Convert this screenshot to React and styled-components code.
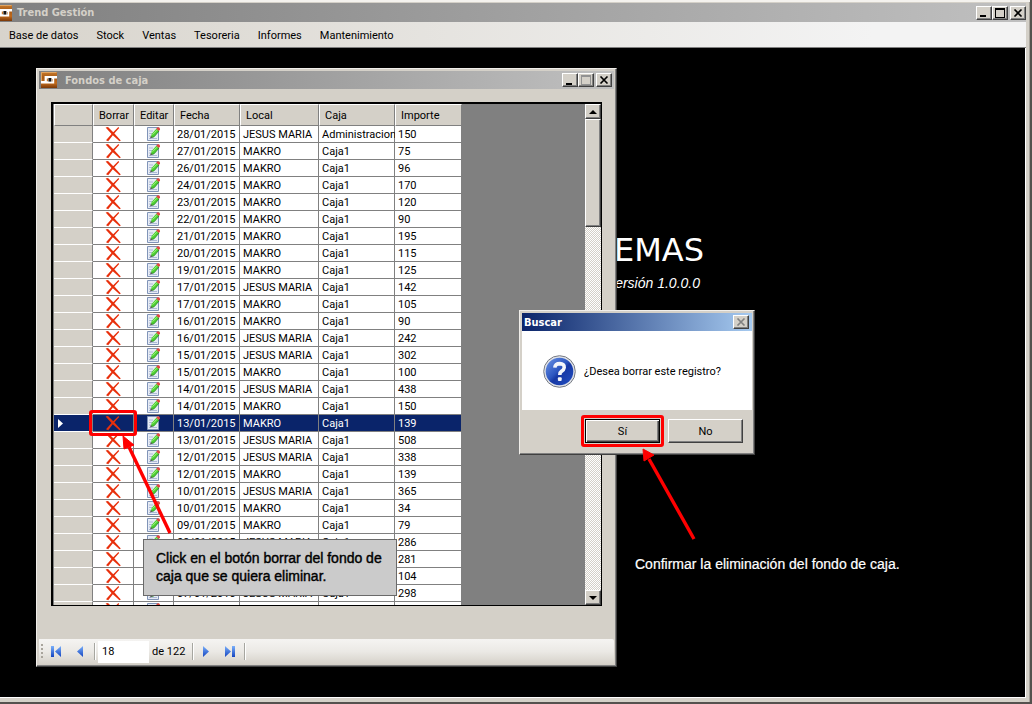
import React from "react";
import styled, { createGlobalStyle, css } from "styled-components";

const face = "#d4d0c8";
const uiFont = `Roboto, "Liberation Sans", sans-serif`;
const noteFont = `"Liberation Sans", Arial, sans-serif`;
const titleFont = `"DejaVu Sans Condensed", "DejaVu Sans", sans-serif`;

const GlobalStyle = createGlobalStyle`
  *, *::before, *::after { box-sizing: border-box; }
  body { margin: 0; background: #000; font: 11px/14px ${uiFont}; color: #000; }
  button, input { font: inherit; color: inherit; margin: 0; }
  button { cursor: default; }
`;

const raised = css`
  border: 1px solid;
  border-color: #fff #404040 #404040 #fff;
  box-shadow: inset -1px -1px 0 #808080;
  background: ${face};
`;

const MainWindow = styled.div`
  display: flex;
  flex-direction: column;
  min-height: 100vh;
  overflow: hidden;
  background: ${face};
  padding: 3px 4px 4px 0;
  border-right: 2px solid #55514e;
  border-bottom: 2px solid #55514e;
  box-shadow: inset 0 2px 0 #f4f2ee, inset -1px 0 0 #a8a49c;
`;

const TitleBar = styled.header`
  display: flex;
  align-items: center;
  flex: none;
  height: ${(p) => p.$height || 18}px;
  padding: ${(p) => p.$pad || "0 3px"};
  color: ${(p) => (p.$active ? "#fff" : face)};
  background: linear-gradient(90deg, ${(p) => (p.$active ? "#0a246a, #a6caf0" : "#808080, #c0c0c0")});
`;

const TitleText = styled.h1`
  flex: 1;
  margin: 0 0 0 ${(p) => p.$gap || 0}px;
  padding-top: 1px;
  font: bold 11px/16px ${titleFont};
`;

const TitleLogo = styled.svg`
  flex: none;
`;

const Caption = styled.button`
  ${raised}
  display: flex;
  align-items: center;
  justify-content: center;
  width: 16px;
  height: 14px;
  padding: 0;
  margin-left: ${(p) => (p.$apart ? 2 : 0)}px;
`;

const MenuBar = styled.nav`
  display: flex;
  align-items: center;
  flex: none;
  height: 26px;
  padding-top: 1px;
  background: linear-gradient(90deg, #d8d4cc, #f3f3f3 85%);
  border-bottom: 1px solid #808080;
`;

const MenuItem = styled.button`
  border: 0;
  padding: 5px 9px 4px;
  background: none;
`;

const Desktop = styled.main`
  position: relative;
  flex: 1;
  background: #000;
  border-right: 1px solid #fff;
  border-bottom: 1px solid #fff;
`;

const Brand = styled.div`
  position: absolute;
  left: 597px;
  top: 184px;
  width: 107px;
  color: #fff;
  text-align: right;
`;

const BrandName = styled.div`
  font: 32px/36px "DejaVu Sans", sans-serif;
`;

const BrandVersion = styled.div`
  padding: 6px 4px 0 0;
  font: italic 14px/18px ${noteFont};
`;

const Frame = styled.section`
  position: absolute;
  left: ${(p) => p.$x}px;
  top: ${(p) => p.$y}px;
  width: ${(p) => p.$w}px;
  padding: 2px;
  background: ${face};
  border: 1px solid;
  border-color: #f0eeea #404040 #404040 #f0eeea;
  box-shadow: inset -1px -1px 0 #808080;
`;

const GridBox = styled.div`
  display: flex;
  justify-content: space-between;
  height: 504px;
  margin: 13px 12px 33px 12px;
  padding-left: 1px;
  border: solid #000;
  border-width: 2px 1px 1px 2px;
  background: #808080;
  overflow: hidden;
`;

const Table = styled.table`
  align-self: flex-start;
  width: 408px;
  table-layout: fixed;
  border-collapse: separate;
  border-spacing: 0;
`;

const HeadCell = styled.th`
  height: 22px;
  padding: 2px 0 0 5px;
  text-align: left;
  font-weight: normal;
  white-space: nowrap;
  background: ${face};
  border: 1px solid;
  border-color: #fff #808080 #808080 #fff;
`;

const RowHead = styled.th`
  height: 17px;
  padding: 0 0 0 4px;
  line-height: 0;
  background: ${(p) => (p.$selected ? "#0a246a" : face)};
  border-bottom: 1px solid #fff;
  border-right: 1px solid #808080;
  text-align: left;
`;

const Cell = styled.td`
  position: relative;
  height: 17px;
  padding: ${(p) => (p.$icon ? "0" : "2px 0 0 3px")};
  line-height: ${(p) => (p.$icon ? "0" : "14px")};
  text-align: ${(p) => (p.$icon ? "center" : "left")};
  white-space: nowrap;
  color: ${(p) => (p.$selected ? "#fff" : "#000")};
  background: ${(p) => (p.$selected ? "#0a246a" : "#fff")};
  border-bottom: 1px solid #808080;
  border-right: 1px solid #808080;
`;

const CellButton = styled.button`
  display: block;
  width: 16px;
  height: 16px;
  margin: 0 auto;
  padding: 0;
  border: 0;
  background: none;
`;

const CellMark = styled.span`
  position: absolute;
  z-index: 1;
  inset: -5px -4px;
  border: 3px solid #f00;
  border-radius: 3px;
  pointer-events: none;
`;

const ScrollBar = styled.div`
  display: flex;
  flex-direction: column;
  width: 16px;
  background: repeating-conic-gradient(#fff 0 25%, ${face} 0 50%) 0 0 / 2px 2px;
`;

const ScrollButton = styled.button`
  ${raised}
  display: flex;
  align-items: center;
  justify-content: center;
  height: 15px;
  padding: 0;
`;

const ScrollThumb = styled.div`
  ${raised}
  height: 108px;
  margin-bottom: auto;
`;

const Navigator = styled.footer`
  display: flex;
  align-items: center;
  height: 25px;
  padding-left: 2px;
  border-radius: 0 2px 2px 0;
  background: linear-gradient(#f5f4f2, #ebe9e5 50%, #d6d2ca);
`;

const Grip = styled.span`
  width: 2px;
  height: 15px;
  margin-right: 1px;
  background: repeating-linear-gradient(#a8a49c 0 2px, transparent 2px 4px);
`;

const NavButton = styled.button`
  display: flex;
  align-items: center;
  justify-content: center;
  width: 24px;
  height: 22px;
  padding: 0;
  border: 0;
  background: none;
`;

const NavRule = styled.span`
  width: 2px;
  height: 17px;
  margin: 0 ${(p) => p.$gap || 0}px;
  background: #a6a6a0;
  border-right: 1px solid #fff;
`;

const Position = styled.input`
  width: 51px;
  height: 22px;
  padding: 0 4px;
  border: 0;
  background: #fff;
`;

const Total = styled.span`
  padding: 0 7px 0 3px;
`;

const Message = styled.div`
  display: flex;
  align-items: center;
  gap: 8px;
  height: 79px;
  padding: 1px 0 0 21px;
  background: #fff;
`;

const MessageText = styled.p`
  margin: 0;
  padding-top: 2px;
`;

const Actions = styled.div`
  display: flex;
  justify-content: flex-end;
  gap: 8px;
  padding: 9px 9px;
`;

const PushSlot = styled.div`
  position: relative;
`;

const Push = styled.button`
  ${raised}
  display: block;
  width: 75px;
  height: 24px;
  padding: 2px 0 0;
  ${(p) => p.$default && "border-color: #000; box-shadow: inset 1px 1px 0 #fff, inset -1px -1px 0 #404040, inset -2px -2px 0 #808080;"}
`;

const PushMark = styled.span`
  position: absolute;
  inset: -4px;
  border: 3px solid #f00;
  border-radius: 3px;
  pointer-events: none;
`;

const Note = styled.p`
  position: absolute;
  left: 143px;
  top: 491px;
  width: 254px;
  margin: 0;
  padding: 9px 0 10px 12px;
  font: 14px/18px ${noteFont};
  -webkit-text-stroke: 0.4px currentColor;
  background: #cbcbcb;
  border: 1px solid #6a6a6a;
`;

const Remark = styled.p`
  position: absolute;
  left: 635px;
  top: 507px;
  margin: 0;
  color: #fff;
  font: 14px/18px ${noteFont};
  -webkit-text-stroke: 0.2px currentColor;
  white-space: nowrap;
`;

const Arrow = styled.svg`
  position: absolute;
  left: ${(p) => p.$x}px;
  top: ${(p) => p.$y}px;
  pointer-events: none;
`;

const Logo = ({ cropped }) => (
  <TitleLogo width={cropped ? 12 : 16} height="16" viewBox={cropped ? "4 0 12 16" : "0 0 16 16"} aria-hidden="true">
    <defs>
      <linearGradient id="copper" x1="0" y1="0" x2="0" y2="1">
        <stop offset="0" stopColor="#c87a2c" />
        <stop offset=".35" stopColor="#a85a14" />
        <stop offset=".7" stopColor="#c06a1c" />
        <stop offset="1" stopColor="#7a3808" />
      </linearGradient>
    </defs>
    <rect width="16" height="16" fill="url(#copper)" />
    <path d="M0 .5H15.5M.5 0V9" stroke="#e0a460" fill="none" />
    <path d="M4 4H16V6.4H13.2V11.6H0V9H3.6V4Z" fill="#fff" />
    <path d="M5.8 6.4H7V9.2H5.8Z" fill="#c87a2c" />
    <path d="M7.4 6H10.4V9.6H7.4Z" fill="#181410" />
    <path d="M11 7H12V9.6H11Z" fill="#d8b08c" />
  </TitleLogo>
);

const Minimize = () => (
  <svg width="10" height="9" aria-hidden="true"><path d="M1 7H7V9H1Z" /></svg>
);
const Maximize = ({ color = "#000" }) => (
  <svg width="10" height="10" aria-hidden="true">
    <path fillRule="evenodd" fill={color} d="M0 0H10V10H0ZM1 2V9H9V2Z" />
  </svg>
);
const Close = ({ color = "#000" }) => (
  <svg width="10" height="8" viewBox="0 0 10 8" aria-hidden="true">
    <path d="M1.5 .5L8.5 7.5M8.5 .5L1.5 7.5" stroke={color} strokeWidth="1.6" />
  </svg>
);

const DeleteIcon = () => (
  <svg width="16" height="16" viewBox="0 0 16 16" aria-hidden="true">
    <path d="M.6 1.4L3 1L9 7L15.8 14.6L14.5 15.2L7.2 8.8Z" fill="#e8300c" />
    <path d="M13.4 1L14.2 2L8.8 8L3.2 15.2L1 14.2L7.2 7.2Z" fill="#e8300c" />
  </svg>
);

const EditIcon = () => (
  <svg width="16" height="16" viewBox="0 0 16 16" aria-hidden="true">
    <path d="M1.5 1.5H12.5V14.5H1.5Z" fill="#e6ebf5" stroke="#8094b8" />
    <path d="M3 5H7M3 7.5H6M3 10H5M3 12.5H11" stroke="#aebbd6" />
    <path d="M4.8 11.6L5.6 8L10.4 2.8L13 5L8 10.8Z" fill="#4cd030" />
    <path d="M5.6 11.4L8 10.8L13 5" stroke="#2f9a24" fill="none" />
    <path d="M6.6 8.6L11 4.2" stroke="#a4f088" />
    <path d="M10.2 2.8L11.6 1.2Q14.4 .8 14 3.6L12.9 5Z" fill="#e04840" />
    <path d="M4 12.6L4.8 10L6.6 11.6Z" fill="#555" />
  </svg>
);

const NavIcon = ({ flip, bar }) => (
  <svg width="12" height="13" viewBox="0 0 12 13" aria-hidden="true">
    <defs>
      <linearGradient id="navBlue" x1="0" y1="0" x2="0" y2="1">
        <stop offset="0" stopColor="#7ab0fa" />
        <stop offset="1" stopColor="#1444c0" />
      </linearGradient>
    </defs>
    <g transform={flip ? "translate(12 0) scale(-1 1)" : undefined}>
      {bar && <rect x="1" y="1" width="3" height="11" fill="url(#navBlue)" />}
      <path d={bar ? "M11 1V12L5 6.5Z" : "M9 1V12L3 6.5Z"} fill="url(#navBlue)" />
    </g>
  </svg>
);

const QuestionIcon = () => (
  <svg width="33" height="33" viewBox="0 0 33 33" aria-hidden="true">
    <defs>
      <linearGradient id="ball" x1="0" y1="0" x2="1" y2="1">
        <stop offset="0" stopColor="#6e96e6" />
        <stop offset=".45" stopColor="#2c56c0" />
        <stop offset=".55" stopColor="#1638a4" />
        <stop offset="1" stopColor="#2450c4" />
      </linearGradient>
    </defs>
    <circle cx="16.5" cy="16.5" r="15.8" fill="#dfe2e8" stroke="#777b84" />
    <circle cx="16.5" cy="16.5" r="13.8" fill="url(#ball)" />
    <path d="M11.8 12.6Q12.2 8.6 16.8 8.6Q21.4 8.8 21.2 12.6Q21 14.8 18.4 16.4Q16.8 17.4 16.8 20" fill="none" stroke="#f4f6fa" strokeWidth="3.6" />
    <rect x="14.9" y="22.2" width="3.8" height="3.8" rx="1" fill="#f4f6fa" />
  </svg>
);

const M = "MAKRO";
const J = "JESUS MARIA";
const rows = [
  ["28/01/2015", J, 150, "Administracion"], ["27/01/2015", M, 75], ["26/01/2015", M, 96],
  ["24/01/2015", M, 170], ["23/01/2015", M, 120], ["22/01/2015", M, 90],
  ["21/01/2015", M, 195], ["20/01/2015", M, 115], ["19/01/2015", M, 125],
  ["17/01/2015", J, 142], ["17/01/2015", M, 105], ["16/01/2015", M, 90],
  ["16/01/2015", J, 242], ["15/01/2015", J, 302], ["15/01/2015", M, 100],
  ["14/01/2015", J, 438], ["14/01/2015", M, 150], ["13/01/2015", M, 139],
  ["13/01/2015", J, 508], ["12/01/2015", J, 338], ["12/01/2015", M, 139],
  ["10/01/2015", J, 365], ["10/01/2015", M, 34], ["09/01/2015", M, 79],
  ["09/01/2015", J, 286], ["08/01/2015", J, 281], ["08/01/2015", M, 104],
  ["07/01/2015", J, 298], ["07/01/2015", M, 120],
];
const columns = [["", 39], ["Borrar", 41], ["Editar", 40], ["Fecha", 66], ["Local", 79], ["Caja", 76], ["Importe", 67]];
const menus = ["Base de datos", "Stock", "Ventas", "Tesoreria", "Informes", "Mantenimiento"];
const selectedIndex = 17;

function FundsTable() {
  return (
    <Table>
      <colgroup>{columns.map(([name, w]) => <col key={name} width={w} />)}</colgroup>
      <thead>
        <tr>{columns.map(([name]) => <HeadCell key={name} scope="col">{name}</HeadCell>)}</tr>
      </thead>
      <tbody>
        {rows.map(([date, shop, amount, till = "Caja1"], i) => {
          const selected = i === selectedIndex;
          return (
            <tr key={i}>
              <RowHead scope="row" $selected={selected}>
                {selected && <svg width="5" height="9" aria-hidden="true"><path d="M0 0L5 4.5L0 9Z" fill="#fff" /></svg>}
              </RowHead>
              <Cell $icon $selected={selected}>
                <CellButton aria-label="Borrar"><DeleteIcon /></CellButton>
                {selected && <CellMark />}
              </Cell>
              <Cell $icon $selected={selected}>
                <CellButton aria-label="Editar"><EditIcon /></CellButton>
              </Cell>
              <Cell $selected={selected}>{date}</Cell>
              <Cell $selected={selected}>{shop}</Cell>
              <Cell $selected={selected}>{till}</Cell>
              <Cell $selected={selected}>{amount}</Cell>
            </tr>
          );
        })}
      </tbody>
    </Table>
  );
}

export default function App() {
  return (
    <>
      <GlobalStyle />
      <MainWindow>
        <TitleBar $height={19} $pad="0">
          <Logo cropped />
          <TitleText $gap={5}>Trend Gestión</TitleText>
          <Caption aria-label="Minimizar"><Minimize /></Caption>
          <Caption aria-label="Maximizar"><Maximize /></Caption>
          <Caption $apart aria-label="Cerrar"><Close /></Caption>
        </TitleBar>
        <MenuBar>{menus.map((m) => <MenuItem key={m}>{m}</MenuItem>)}</MenuBar>
        <Desktop>
          <Brand>
            <BrandName>EMAS</BrandName>
            <BrandVersion>versión 1.0.0.0</BrandVersion>
          </Brand>

          <Frame $x={36} $y={20} $w={581}>
            <TitleBar $pad="0 2px">
              <Logo />
              <TitleText as="h2" $gap={8}>Fondos de caja</TitleText>
              <Caption aria-label="Minimizar"><Minimize /></Caption>
              <Caption aria-label="Maximizar" disabled><Maximize color="#929292" /></Caption>
              <Caption $apart aria-label="Cerrar"><Close /></Caption>
            </TitleBar>
            <GridBox>
              <FundsTable />
              <ScrollBar>
                <ScrollButton aria-label="Subir"><svg width="8" height="4" aria-hidden="true"><path d="M4 0L8 4H0Z" /></svg></ScrollButton>
                <ScrollThumb />
                <ScrollButton aria-label="Bajar"><svg width="8" height="4" aria-hidden="true"><path d="M4 4L8 0H0Z" /></svg></ScrollButton>
              </ScrollBar>
            </GridBox>
            <Navigator>
              <Grip />
              <NavButton aria-label="Primero"><NavIcon bar /></NavButton>
              <NavButton aria-label="Anterior"><NavIcon /></NavButton>
              <NavRule $gap={2} />
              <Position aria-label="Registro actual" defaultValue="18" />
              <Total>de 122</Total>
              <NavRule />
              <NavButton aria-label="Siguiente"><NavIcon flip /></NavButton>
              <NavButton aria-label="Último"><NavIcon flip bar /></NavButton>
              <NavRule $gap={2} />
            </Navigator>
          </Frame>

          <Note>Click en el botón borrar del fondo de<br />caja que se quiera eliminar.</Note>
          <Arrow $x={118} $y={386} width="56" height="104" aria-hidden="true">
            <path d="M52 99L11 13" stroke="#f00" strokeWidth="3.4" />
            <path d="M5 2L6 15L16 11Z" fill="#f00" stroke="#f00" />
          </Arrow>

          <Frame $x={519} $y={262} $w={236} role="dialog" aria-label="Buscar">
            <TitleBar $active $pad="0 3px 0 2px">
              <TitleText as="h2">Buscar</TitleText>
              <Caption aria-label="Cerrar" disabled><Close color="#808080" /></Caption>
            </TitleBar>
            <Message>
              <QuestionIcon />
              <MessageText>¿Desea borrar este registro?</MessageText>
            </Message>
            <Actions>
              <PushSlot><Push $default>Sí</Push><PushMark /></PushSlot>
              <Push>No</Push>
            </Actions>
          </Frame>

          <Arrow $x={638} $y={398} width="62" height="98" aria-hidden="true">
            <path d="M56 93L11 13" stroke="#f00" strokeWidth="3.4" />
            <path d="M5 3L6 15L16 9Z" fill="#f00" stroke="#f00" />
          </Arrow>
          <Remark>Confirmar la eliminación del fondo de caja.</Remark>
        </Desktop>
      </MainWindow>
    </>
  );
}
